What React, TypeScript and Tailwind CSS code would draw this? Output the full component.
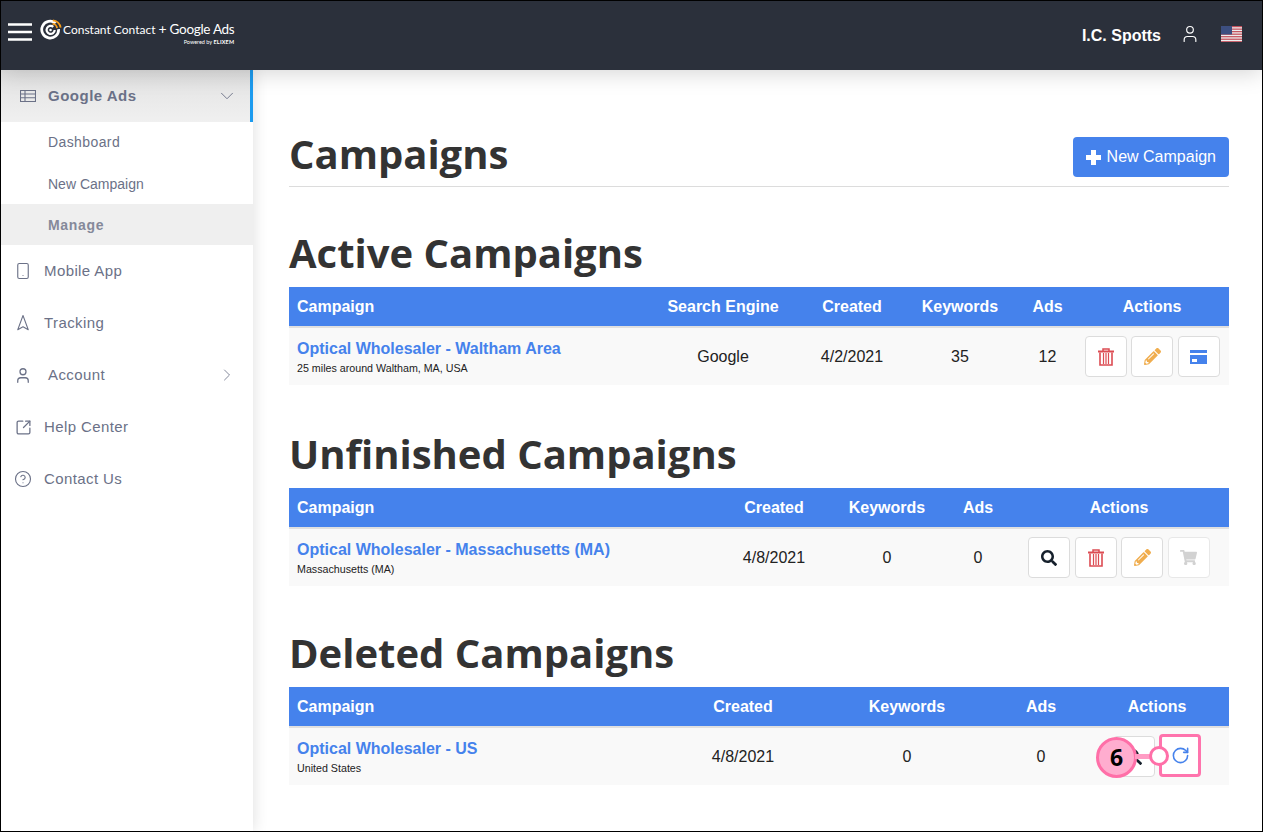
import type { ReactNode } from "react";
import {
  ChevronDown,
  ChevronRight,
  CircleHelp,
  Navigation2,
  RotateCw,
  Smartphone,
  SquareArrowOutUpRight,
  User,
} from "lucide-react";
import { FaPencilAlt, FaSearch, FaShoppingCart } from "react-icons/fa";

const sans = "font-['Liberation_Sans',Arial,sans-serif]";

function TrashIcon() {
  return (
    <svg width="16" height="18" viewBox="0 0 16 18" className="text-[#dc4c53]" fill="none" stroke="currentColor">
      <path d="M0 3.5h16" strokeWidth="2" />
      <path d="M5 3V1h6v2" strokeWidth="1.5" />
      <path d="M2 4.5V17h12V4.5" strokeWidth="1.6" />
      <path d="M5.5 5v11M8 5v11M10.5 5v11" strokeWidth="1.2" />
    </svg>
  );
}

function CardIcon() {
  return (
    <svg width="17" height="14" viewBox="0 0 17 14" fill="#4582ec">
      <path d="M0 0h17v3H0zM0 5h17v9H0z" />
      <path d="M2 9h5v3H2z" fill="#fff" />
    </svg>
  );
}

function Logo() {
  return (
    <div className="flex items-start text-white">
      <svg width="22" height="22" viewBox="0 0 24 24" fill="none">
        <path d="M17 4.5A9.2 9.2 0 1 0 20.3 11" stroke="#fff" strokeWidth="3" />
        <path d="M14.5 8.6A4.4 4.4 0 1 0 16 12" stroke="#fff" strokeWidth="2.4" />
        <circle cx="11.5" cy="12" r="1.4" fill="#fff" />
        <path d="M14 1.5A9 9 0 0 1 22.5 9.5M13.6 5.4A5 5 0 0 1 18.6 10" stroke="#f59c1a" strokeWidth="2" />
      </svg>
      <div className="ml-[1px] flex flex-col items-end">
        <div className="flex items-baseline whitespace-nowrap font-['Lato',sans-serif] leading-[20px]">
          <span className="text-[12px]">Constant Contact</span>
          <span className="ml-[3px] text-[14px]">+</span>
          <span className="ml-[3px] text-[13.5px] tracking-[-0.3px]">Google Ads</span>
        </div>
        <div className="mt-[-1px] font-['Lato',sans-serif] text-[5.5px] leading-[7px]">
          Powered by <b className="tracking-[0.2px]">ELIXEM</b>
        </div>
      </div>
    </div>
  );
}

function Flag() {
  const stripes = [0, 3, 6, 9, 12, 15, 18];
  return (
    <svg width="21" height="16" viewBox="0 0 21 16">
      <rect width="21" height="16" fill="#eee" />
      {stripes.map((y) => (
        <rect key={y} y={y * 0.84} width="21" height="1.25" fill="#c4505c" />
      ))}
      <rect width="11" height="8.5" fill="#3d4f80" />
    </svg>
  );
}

function Header() {
  return (
    <header className="relative z-20 flex h-[69px] shrink-0 items-center bg-[#2b303b] shadow-[0_2px_22px_rgba(0,0,0,0.18)]">
      <svg width="24" height="18" viewBox="0 0 24 18" className="ml-[7px] mb-[8px]" stroke="#fff" strokeWidth="2.6">
        <path d="M0 1.5h24M0 9h24M0 16.5h24" />
      </svg>
      <div className="ml-[8px] mb-[7px]">
        <Logo />
      </div>
      <div className={`ml-auto flex items-center ${sans}`}>
        <span className="text-[16px] font-bold text-white">I.C. Spotts</span>
        <User className="ml-[19px] mb-[3px] h-[20px] w-[20px] text-white" strokeWidth={1.4} />
        <span className="ml-[21px] mb-[3px] mr-[20px] flex">
          <Flag />
        </span>
      </div>
    </header>
  );
}

function NavItem({ icon, label, arrow, indent }: { icon: ReactNode; label: string; arrow?: boolean; indent?: boolean }) {
  return (
    <div className="flex h-[52px] items-center pl-[13px] pr-[16px] text-[#6b7187]">
      <span className="flex w-[18px] justify-center">{icon}</span>
      <span className={`${indent ? "ml-[16px]" : "ml-[12px]"} text-[15px] tracking-[0.4px]`}>{label}</span>
      {arrow && <ChevronRight className="ml-auto h-[20px] w-[20px]" strokeWidth={1} />}
    </div>
  );
}

function Sidebar() {
  return (
    <aside
      className={`relative z-10 flex w-[252px] shrink-0 flex-col bg-white shadow-[1px_0_14px_rgba(0,0,0,0.12)] ${sans}`}
    >
      <div className="flex h-[52px] items-center border-r-[3px] border-[#1c9bef] bg-gradient-to-b from-[#e2e2e2] to-[#f0f0f0] pl-[19px] pr-[12px] text-[#6b7187]">
        <svg width="16" height="14" viewBox="0 0 16 14" fill="none" stroke="currentColor" strokeWidth="1.1">
          <path d="M.5 1.5h15v11H.5zM.5 5h15M.5 8.7h15M5 1.5v11" />
        </svg>
        <span className="ml-[12px] text-[15px] font-bold tracking-[0.5px]">Google Ads</span>
        <ChevronDown className="ml-auto h-[22px] w-[22px]" strokeWidth={1} />
      </div>
      <div className="flex h-[41px] items-center pl-[47px] text-[14px] tracking-[0.4px] text-[#6b7187]">Dashboard</div>
      <div className="flex h-[41px] items-center pl-[47px] pt-[2px] text-[14px] text-[#6b7187]">New Campaign</div>
      <div className="flex h-[41px] items-center bg-[#efefef] pl-[47px] pt-[2px] text-[14px] font-bold tracking-[0.7px] text-[#85899a]">
        Manage
      </div>
      <NavItem icon={<Smartphone className="h-[18px] w-[18px]" strokeWidth={1.5} />} label="Mobile App" />
      <NavItem icon={<Navigation2 className="h-[20px] w-[20px]" strokeWidth={1.4} />} label="Tracking" />
      <NavItem icon={<User className="h-[19px] w-[19px]" strokeWidth={1.7} />} label="Account" arrow indent />
      <NavItem icon={<SquareArrowOutUpRight className="h-[17px] w-[17px]" strokeWidth={1.8} />} label="Help Center" />
      <NavItem icon={<CircleHelp className="h-[18px] w-[18px]" strokeWidth={1.5} />} label="Contact Us" />
    </aside>
  );
}

function ActionButton({ children, muted }: { children: ReactNode; muted?: boolean }) {
  return (
    <span
      className={`flex h-[41px] w-[42px] items-center justify-center rounded-[4px] border bg-white ${
        muted ? "border-[#e8e8e8]" : "border-[#dcdcdc]"
      }`}
    >
      {children}
    </span>
  );
}

const search = <ActionButton><FaSearch className="h-[16px] w-[16px] text-[#16202c]" /></ActionButton>;
const trash = <ActionButton><TrashIcon /></ActionButton>;
const pencil = <ActionButton><FaPencilAlt className="h-[17px] w-[17px] text-[#f0ad4e]" /></ActionButton>;
const card = <ActionButton><CardIcon /></ActionButton>;
const cart = <ActionButton muted><FaShoppingCart className="h-[17px] w-[17px] text-[#d2d2d2]" /></ActionButton>;
const refresh = (
  <span className="-mt-[2px] flex h-[43px] w-[42px] items-center justify-center rounded-[4px] border-[3px] border-[#ff74ad] bg-white">
    <RotateCw className="h-[19px] w-[19px] text-[#4582ec]" strokeWidth={2} />
  </span>
);

interface CampaignTableProps {
  columns: string;
  heads: string[];
  name: string;
  place: string;
  cells: string[];
  actions: ReactNode;
  actionsClass: string;
  children?: ReactNode;
}

function CampaignTable({ columns, heads, name, place, cells, actions, actionsClass, children }: CampaignTableProps) {
  return (
    <div className={sans}>
      <div className={`grid h-[41px] items-center border-b-[2px] border-[#e0e0e0] bg-[#4582ec] pt-[1px] text-[16px] font-bold text-white ${columns}`}>
        {heads.map((head, i) => (
          <span key={head} className={i === 0 ? "pl-[8px]" : "text-center"}>
            {head}
          </span>
        ))}
      </div>
      <div className={`grid h-[57px] items-center bg-[#f9f9f9] text-[16px] text-[#222] ${columns}`}>
        <div className="pl-[8px] pt-[1px]">
          <div className="text-[16px] font-bold leading-[20px] text-[#4582ec]">{name}</div>
          <div className="mt-[2px] text-[10.7px] leading-[14px]">{place}</div>
        </div>
        {cells.map((cell, i) => (
          <span key={i} className="text-center">
            {cell}
          </span>
        ))}
        <div className={`relative flex items-start justify-center ${actionsClass}`}>
          {actions}
          {children}
        </div>
      </div>
    </div>
  );
}

function Heading({ children }: { children: ReactNode }) {
  return <h2 className="font-['Open_Sans',sans-serif] text-[40px] font-bold leading-[50px] text-[#333]">{children}</h2>;
}

export default function App() {
  return (
    <div className="flex h-[832px] w-[1263px] flex-col overflow-hidden border border-black bg-white">
      <Header />
      <div className="flex min-h-0 flex-1">
        <Sidebar />
        <main className="min-w-0 flex-1 pl-[36px] pr-[33px] pt-[59px]">
          <div className="flex items-start justify-between border-b border-[#dcdcdc] pb-[7px]">
            <h1 className="font-['Open_Sans',sans-serif] text-[40px] font-bold leading-[50px] text-[#333]">Campaigns</h1>
            <span className={`mt-[8px] flex h-[40px] items-center rounded-[4px] bg-[#4582ec] pl-[13px] pr-[13px] text-[16px] text-white ${sans}`}>
              <svg width="15" height="15" viewBox="0 0 15 15" fill="#fff" className="mr-[6px]">
                <path d="M5 0h5v5h5v5h-5v5H5v-5H0V5h5z" />
              </svg>
              New Campaign
            </span>
          </div>

          <div className="mt-[41px] mb-[9px]"><Heading>Active Campaigns</Heading></div>
          <CampaignTable
            columns="grid-cols-[353px_162px_96px_120px_55px_154px]"
            heads={["Campaign", "Search Engine", "Created", "Keywords", "Ads", "Actions"]}
            name="Optical Wholesaler - Waltham Area"
            place="25 miles around Waltham, MA, USA"
            cells={["Google", "4/2/2021", "35", "12"]}
            actions={<>{trash}{pencil}{card}</>}
            actionsClass="gap-[4.5px]"
          />

          <div className="mt-[44px] mb-[9px]"><Heading>Unfinished Campaigns</Heading></div>
          <CampaignTable
            columns="grid-cols-[432px_106px_120px_62px_220px]"
            heads={["Campaign", "Created", "Keywords", "Ads", "Actions"]}
            name="Optical Wholesaler - Massachusetts (MA)"
            place="Massachusetts (MA)"
            cells={["4/8/2021", "0", "0"]}
            actions={<>{search}{trash}{pencil}{cart}</>}
            actionsClass="gap-[4.5px]"
          />

          <div className="mt-[42px] mb-[9px]"><Heading>Deleted Campaigns</Heading></div>
          <CampaignTable
            columns="grid-cols-[380px_148px_180px_88px_144px]"
            heads={["Campaign", "Created", "Keywords", "Ads", "Actions"]}
            name="Optical Wholesaler - US"
            place="United States"
            cells={["4/8/2021", "0", "0"]}
            actions={<>{search}{refresh}</>}
            actionsClass="gap-[4px]"
          >
            {/* callout sits on top of the search button */}
            <span className="absolute left-[11px] top-[1px] flex h-[41px] w-[41px] items-center justify-center rounded-full border-[3px] border-[#ff6fa8] bg-[#ffadcf] font-['Open_Sans',sans-serif] text-[23px] font-bold text-black">
              6
            </span>
            <span className="absolute left-[50px] top-[18px] h-[5px] w-[16px] bg-[#ff9cc4]" />
            <span className="absolute left-[64px] top-[10px] h-[20px] w-[20px] rounded-full border-[3px] border-[#ff6fa8] bg-white" />
          </CampaignTable>
        </main>
      </div>
    </div>
  );
}
